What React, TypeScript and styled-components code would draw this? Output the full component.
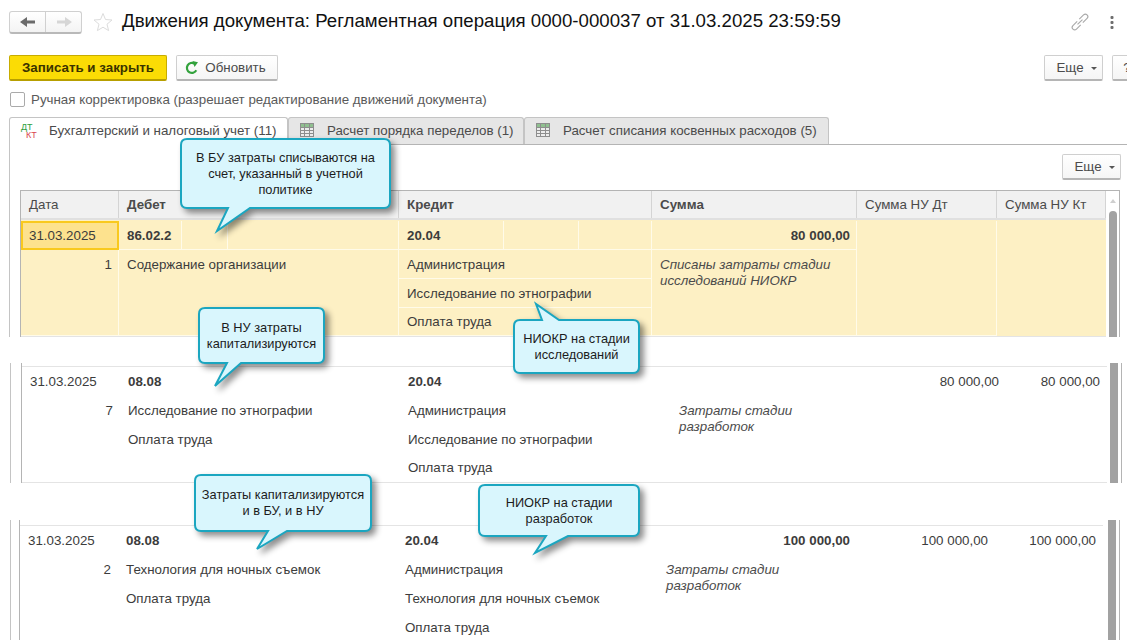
// App.tsx
import React from "react";
import styled, { createGlobalStyle } from "styled-components";

const GlobalStyle = createGlobalStyle`
  html, body {
    margin: 0;
    padding: 0;
    background: #fff;
    overflow: hidden;
  }
  body {
    font-family: "Liberation Sans", Arial, sans-serif;
    font-size: 13.33px;
    color: #4b4b4b;
  }
`;

const Page = styled.div`
  position: relative;
  width: 1127px;
  height: 640px;
  overflow: hidden;
`;

const Header = styled.div`
  display: flex;
  align-items: center;
  height: 24px;
  padding: 10px 0 0 9px;
`;

const NavGroup = styled.div`
  display: flex;
  width: 73px;
  height: 23px;
  box-sizing: border-box;
  border: 1px solid #d0d0d0;
  border-bottom: 2px solid #b9b9b9;
  border-radius: 3px;
  background: linear-gradient(#fff, #f3f3f3);
`;

const NavButton = styled.div<{ $divider?: boolean }>`
  flex: 1;
  display: flex;
  align-items: center;
  justify-content: center;
  ${(p) => (p.$divider ? "border-right: 1px solid #d0d0d0;" : "")}
`;

const StarIcon = styled.svg`
  width: 20px;
  height: 20px;
  margin: 0 9px 0 11px;
`;

const Title = styled.h1`
  flex: 1;
  margin: 0;
  padding-bottom: 2px;
  font-size: 18.67px;
  font-weight: normal;
  color: #111;
  white-space: nowrap;
`;

const HeaderTools = styled.div`
  display: flex;
  align-items: center;
  gap: 21px;
  margin-right: 13px;
`;

const Toolbar = styled.div`
  display: flex;
  align-items: flex-start;
  gap: 9px;
  margin-top: 21px;
  padding-left: 9px;
  height: 26px;
`;

const Button = styled.div<{ $width: number; $primary?: boolean }>`
  display: flex;
  align-items: center;
  justify-content: center;
  flex-shrink: 0;
  gap: 7px;
  box-sizing: border-box;
  width: ${(p) => p.$width}px;
  height: 26px;
  border-radius: 2px;
  white-space: nowrap;
  ${(p) =>
    p.$primary
      ? `
    background: #fbdc05;
    border: 1px solid #c7ac00;
    border-bottom: 2px solid #b79f00;
    color: #3a3300;
    font-weight: bold;
  `
      : `
    background: linear-gradient(#fff, #f5f5f5);
    border: 1px solid #cfcfcf;
    border-bottom: 2px solid #b5b5b5;
    color: #4b4b4b;
  `}
`;

const RefreshButton = styled(Button)`
  gap: 6px;
  padding-right: 3px;
`;

const MoreButton = styled(Button)`
  padding-left: 6px;
`;

const ToolbarSpacer = styled.div`
  width: 748px;
  flex-shrink: 0;
`;

const Caret = styled.span`
  width: 0;
  height: 0;
  margin-top: 2px;
  border-left: 3px solid transparent;
  border-right: 3px solid transparent;
  border-top: 3px solid #555;
`;

const CheckRow = styled.label`
  display: flex;
  align-items: center;
  gap: 6px;
  height: 16px;
  margin-top: 10px;
  padding-left: 10px;
  color: #5a5a5a;
`;

const CheckBox = styled.span`
  width: 15px;
  height: 15px;
  box-sizing: border-box;
  border: 1px solid #aaa;
  border-radius: 2px;
  background: #fff;
`;

const TabBar = styled.div`
  display: flex;
  height: 28px;
  margin: 10px 0 0 9px;
  box-sizing: border-box;
  border-bottom: 1px solid #b4b4b4;
`;

const Tab = styled.div<{ $width: number; $active?: boolean }>`
  display: flex;
  align-items: center;
  gap: 13px;
  box-sizing: border-box;
  width: ${(p) => p.$width}px;
  height: ${(p) => (p.$active ? 28 : 27)}px;
  padding: 0 0 2px 11px;
  border: 1px solid #c4c4c4;
  border-bottom: none;
  border-radius: 3px 3px 0 0;
  background: ${(p) => (p.$active ? "#fff" : "#e6e6e6")};
  color: #4b4b4b;
  white-space: nowrap;
`;

const DtKt = styled.span`
  display: block;
  width: 15px;
  flex-shrink: 0;
  font-size: 9px;
  line-height: 8px;
`;

const Dt = styled.span`
  display: block;
  color: #2e9e3e;
`;

const Kt = styled.span`
  display: block;
  padding-left: 5px;
  color: #d9474f;
`;

const PanelTools = styled.div`
  display: flex;
  justify-content: flex-end;
  height: 45px;
  box-sizing: border-box;
  margin-left: 9px;
  padding: 9px 6px 0 0;
  border-left: 1px solid #c4c4c4;
`;

// Each strip is a fragment of the same table, cut apart by a white gap
const Strip = styled.div<{ $height: number; $gap: number; $left: number; $inset: number }>`
  display: flex;
  height: ${(p) => p.$height}px;
  margin-top: ${(p) => p.$gap}px;
  margin-left: ${(p) => p.$left}px;
  padding-left: ${(p) => p.$inset}px;
  border-left: 1px solid #c4c4c4;
  overflow: hidden;
`;

const TableBody = styled.div<{ $width: number }>`
  width: ${(p) => p.$width}px;
  flex-shrink: 0;
  border-left: 1px solid #b4b4b4;
`;

const HeaderRow = styled.div<{ $cols: string }>`
  display: grid;
  grid-template-columns: ${(p) => p.$cols};
  height: 30px;
  box-sizing: border-box;
  border-top: 1px solid #b4b4b4;
  border-bottom: 2px solid #e0e0e0;
`;

const HeaderCell = styled.div<{ $bold?: boolean }>`
  display: flex;
  align-items: center;
  padding-left: 8px;
  background: #f1f1f1;
  border-right: 1px solid #d4d4d4;
  font-weight: ${(p) => (p.$bold ? "bold" : "normal")};
  color: #4b4b4b;
`;

const EntryGrid = styled.div<{ $cols: string; $marked?: boolean; $top: number; $closed?: boolean }>`
  display: grid;
  grid-template-columns: ${(p) => p.$cols};
  grid-template-rows: repeat(3, 29px) ${(p) => (p.$closed ? 28 : 29)}px;
  margin-top: ${(p) => p.$top}px;
  border-top: 1px solid ${(p) => (p.$marked ? "#fdf0c4" : "#e4e4e4")};
  ${(p) => (p.$closed ? "border-bottom: 1px solid #e4e4e4;" : "")}
  background: ${(p) => (p.$marked ? "#fdf0c4" : "#fff")};
`;

const Cell = styled.div<{
  $col: number;
  $row: number;
  $rowSpan?: number;
  $right?: boolean;
  $bold?: boolean;
  $italic?: boolean;
  $lined?: boolean;
}>`
  grid-column: ${(p) => p.$col};
  grid-row: ${(p) => p.$row} / span ${(p) => p.$rowSpan || 1};
  display: flex;
  align-items: ${(p) => (p.$rowSpan ? "flex-start" : "center")};
  justify-content: ${(p) => (p.$right ? "flex-end" : "flex-start")};
  box-sizing: border-box;
  padding: ${(p) => (p.$rowSpan ? "7px" : "0")} ${(p) => (p.$right ? 7 : 8)}px 0 8px;
  min-width: 0;
  font-weight: ${(p) => (p.$bold ? "bold" : "normal")};
  font-style: ${(p) => (p.$italic ? "italic" : "normal")};
  line-height: 16px;
  color: #3c3c3c;
  ${(p) => (p.$lined ? "box-shadow: inset -1px -1px 0 #fffbe9;" : "")}
`;

const Note = styled.span<{ $max: number }>`
  display: block;
  max-width: ${(p) => p.$max}px;
  white-space: normal;
  color: #4b4b4b;
`;

const ActiveDate = styled(Cell)`
  background: #fde28e;
  border: 2px solid #f9c91e;
  padding-left: 6px;
`;

const SubCells = styled.div<{ $cols: string }>`
  display: grid;
  grid-template-columns: ${(p) => p.$cols};
  height: 100%;
  width: calc(100% + 16px);
  margin-left: -8px;
`;

const SubCell = styled.div`
  display: flex;
  align-items: center;
  padding-left: 8px;
  box-shadow: inset -1px 0 0 #fffbe9;
`;

const Rail = styled.div<{ $offset: number; $width: number; $top?: boolean }>`
  flex-shrink: 0;
  width: ${(p) => p.$width}px;
  padding-left: ${(p) => p.$offset}px;
  box-sizing: border-box;
  border-right: 1px solid #b4b4b4;
  ${(p) => (p.$top ? "border-top: 1px solid #b4b4b4;" : "")}
`;

const Thumb = styled.div<{ $rounded?: boolean; $top: number }>`
  width: 8px;
  height: 100%;
  margin-top: ${(p) => p.$top}px;
  background: #a2a2a2;
  border-radius: ${(p) => (p.$rounded ? "4px 4px 0 0" : "0")};
`;

const RailArrow = styled.span`
  position: absolute;
  left: 1110px;
  top: 199px;
  width: 0;
  height: 0;
  border-left: 3px solid transparent;
  border-right: 3px solid transparent;
  border-bottom: 4px solid #cfcfcf;
`;

const CalloutBox = styled.div<{ $x: number; $y: number; $w: number; $h: number }>`
  position: absolute;
  left: ${(p) => p.$x}px;
  top: ${(p) => p.$y}px;
  width: ${(p) => p.$w}px;
  height: ${(p) => p.$h}px;
  display: flex;
  align-items: center;
  justify-content: center;
`;

const CalloutShape = styled.svg`
  position: absolute;
  left: 0;
  top: 0;
  overflow: visible;
  filter: drop-shadow(4px 4px 3px rgba(0, 0, 0, 0.45));
`;

const CalloutText = styled.div`
  position: relative;
  text-align: center;
  font-size: 12.8px;
  line-height: 16px;
  color: #1c1c1c;
  white-space: pre-line;
`;

type CalloutProps = {
  x: number;
  y: number;
  w: number;
  h: number;
  tail: [number, number, number, number];
  up?: boolean;
  text: string;
};

// tail = base start, base end, tip x, tip y (page coordinates)
const Callout: React.FC<CalloutProps> = ({ x, y, w, h, tail, up, text }) => {
  const r = 6;
  const a = tail[0] - x;
  const b = tail[1] - x;
  const tx = tail[2] - x;
  const ty = tail[3] - y;
  const d = up
    ? `M${r} 0 H${a} L${tx} ${ty} L${b} 0 H${w - r} Q${w} 0 ${w} ${r} V${h - r} Q${w} ${h} ${w - r} ${h} H${r} Q0 ${h} 0 ${h - r} V${r} Q0 0 ${r} 0 Z`
    : `M${r} 0 H${w - r} Q${w} 0 ${w} ${r} V${h - r} Q${w} ${h} ${w - r} ${h} H${b} L${tx} ${ty} L${a} ${h} H${r} Q0 ${h} 0 ${h - r} V${r} Q0 0 ${r} 0 Z`;
  return (
    <CalloutBox $x={x} $y={y} $w={w} $h={h}>
      <CalloutShape width={w} height={h}>
        <path d={d} fill="#d9f6fd" stroke="#1ba6c0" strokeWidth="2" />
      </CalloutShape>
      <CalloutText>{text}</CalloutText>
    </CalloutBox>
  );
};

const TableIcon: React.FC = () => (
  <svg width="14" height="14" viewBox="0 0 14 14">
    <rect x="0.5" y="0.5" width="13" height="13" fill="#ececec" stroke="#8d8d8d" />
    <rect x="1" y="1" width="12" height="3" fill="#8fbf8f" />
    <path d="M0 4.5H14M0 7.5H14M0 10.5H14M4.5 0V14M9.5 0V14" stroke="#8d8d8d" />
  </svg>
);

const ArrowIcon: React.FC<{ left?: boolean; color: string }> = ({ left, color }) => (
  <svg width="16" height="12" viewBox="0 0 16 12">
    <path
      d={left ? "M0 6 L7 1 V4.5 H15 V7.5 H7 V11 Z" : "M16 6 L9 1 V4.5 H1 V7.5 H9 V11 Z"}
      fill={color}
    />
  </svg>
);

const RefreshIcon: React.FC = () => (
  <svg width="14" height="14" viewBox="0 0 14 14">
    <path d="M11.3 9.3 A5 5 0 1 1 9.5 2.6" fill="none" stroke="#33a23d" strokeWidth="2.2" />
    <path d="M7.5 0 L13 1.2 L9.5 6 Z" fill="#33a23d" />
  </svg>
);

const LinkIcon: React.FC = () => (
  <svg width="18" height="18" viewBox="0 0 18 18" fill="none" stroke="#a9a9a9" strokeWidth="1.1" overflow="visible">
    <g transform="rotate(-45 9 9)">
      <path d="M7.5 6.5H1.5a2.5 2.5 0 0 0 0 5H7.5" />
      <path d="M10.5 6.5H16.5a2.5 2.5 0 0 1 0 5H10.5" />
      <path d="M5.5 9H12.5" />
    </g>
  </svg>
);

const DotsIcon: React.FC = () => (
  <svg width="4" height="14" viewBox="0 0 4 14" fill="#6e6e6e">
    <rect x="0.5" y="1" width="3" height="3" rx="1" />
    <rect x="0.5" y="6" width="3" height="3" rx="1" />
    <rect x="0.5" y="11" width="3" height="3" rx="1" />
  </svg>
);

const COLS_TOP = "98px 280px 253px 205px 140px 109px";
const COLS_MID = "98px 280px 271px 186px 149px 101px";
const COLS_LOW = "98px 279px 261px 199px 138px 108px";

const App: React.FC = () => {
  return (
    <Page>
      <GlobalStyle />
      <Header>
        <NavGroup>
          <NavButton $divider>
            <ArrowIcon left color="#6b6b6b" />
          </NavButton>
          <NavButton>
            <ArrowIcon color="#d6d6d6" />
          </NavButton>
        </NavGroup>
        <StarIcon viewBox="0 0 20 20">
          <path
            d="M10 1.5 L12.5 7.5 L19 8 L14 12.2 L15.6 18.6 L10 15.2 L4.4 18.6 L6 12.2 L1 8 L7.5 7.5 Z"
            fill="none"
            stroke="#dcdcdc"
          />
        </StarIcon>
        <Title>Движения документа: Регламентная операция 0000-000037 от 31.03.2025 23:59:59</Title>
        <HeaderTools>
          <LinkIcon />
          <DotsIcon />
        </HeaderTools>
      </Header>

      <Toolbar>
        <Button $width={158} $primary>Записать и закрыть</Button>
        <RefreshButton $width={102}>
          <RefreshIcon />
          Обновить
        </RefreshButton>
        <ToolbarSpacer />
        <MoreButton $width={59}>
          Еще <Caret />
        </MoreButton>
        <Button $width={30}>?</Button>
      </Toolbar>

      <CheckRow>
        <CheckBox />
        Ручная корректировка (разрешает редактирование движений документа)
      </CheckRow>

      <TabBar>
        <Tab $width={279} $active>
          <DtKt>
            <Dt>ДТ</Dt>
            <Kt>КТ</Kt>
          </DtKt>
          Бухгалтерский и налоговый учет (11)
        </Tab>
        <Tab $width={236}>
          <TableIcon />
          Расчет порядка переделов (1)
        </Tab>
        <Tab $width={305}>
          <TableIcon />
          Расчет списания косвенных расходов (5)
        </Tab>
      </TabBar>

      <PanelTools>
        <MoreButton $width={59}>
          Еще <Caret />
        </MoreButton>
      </PanelTools>

      <Strip $height={147} $gap={0} $left={9} $inset={10}>
        <TableBody $width={1085}>
          <HeaderRow $cols={COLS_TOP}>
            <HeaderCell>Дата</HeaderCell>
            <HeaderCell $bold>Дебет</HeaderCell>
            <HeaderCell $bold>Кредит</HeaderCell>
            <HeaderCell $bold>Сумма</HeaderCell>
            <HeaderCell>Сумма НУ Дт</HeaderCell>
            <HeaderCell>Сумма НУ Кт</HeaderCell>
          </HeaderRow>
          <EntryGrid $cols={COLS_TOP} $marked $top={0} $closed>
            <ActiveDate $col={1} $row={1}>31.03.2025</ActiveDate>
            <Cell $col={2} $row={1} $bold $lined>
              <SubCells $cols="63px 46px 171px">
                <SubCell>86.02.2</SubCell>
                <SubCell />
                <SubCell />
              </SubCells>
            </Cell>
            <Cell $col={3} $row={1} $bold $lined>
              <SubCells $cols="105px 75px 73px">
                <SubCell>20.04</SubCell>
                <SubCell />
                <SubCell />
              </SubCells>
            </Cell>
            <Cell $col={4} $row={1} $bold $right $lined>80 000,00</Cell>
            <Cell $col={5} $row={1} $rowSpan={4} $lined />
            <Cell $col={6} $row={1} $rowSpan={4} />
            <Cell $col={1} $row={2} $rowSpan={3} $right $lined>1</Cell>
            <Cell $col={2} $row={2} $rowSpan={3} $lined>Содержание организации</Cell>
            <Cell $col={3} $row={2} $lined>Администрация</Cell>
            <Cell $col={3} $row={3} $lined>Исследование по этнографии</Cell>
            <Cell $col={3} $row={4} $lined>Оплата труда</Cell>
            <Cell $col={4} $row={2} $rowSpan={3} $italic $lined>
              <Note $max={189}>Списаны затраты стадии исследований НИОКР</Note>
            </Cell>
          </EntryGrid>
        </TableBody>
        <Rail $offset={3} $width={14} $top>
          <Thumb $rounded $top={20} />
        </Rail>
      </Strip>
      <RailArrow />

      <Strip $height={120} $gap={26} $left={10} $inset={10}>
        <TableBody $width={1085}>
          <EntryGrid $cols={COLS_MID} $top={3} $closed>
            <Cell $col={1} $row={1}>31.03.2025</Cell>
            <Cell $col={2} $row={1} $bold>08.08</Cell>
            <Cell $col={3} $row={1} $bold>20.04</Cell>
            <Cell $col={5} $row={1} $right>80 000,00</Cell>
            <Cell $col={6} $row={1} $right>80 000,00</Cell>
            <Cell $col={1} $row={2} $right>7</Cell>
            <Cell $col={2} $row={2}>Исследование по этнографии</Cell>
            <Cell $col={2} $row={3}>Оплата труда</Cell>
            <Cell $col={3} $row={2}>Администрация</Cell>
            <Cell $col={3} $row={3}>Исследование по этнографии</Cell>
            <Cell $col={3} $row={4}>Оплата труда</Cell>
            <Cell $col={4} $row={2} $rowSpan={3} $italic>
              <Note $max={130}>Затраты стадии разработок</Note>
            </Cell>
          </EntryGrid>
        </TableBody>
        <Rail $offset={3} $width={15}>
          <Thumb $top={0} />
        </Rail>
      </Strip>

      <Strip $height={120} $gap={37} $left={10} $inset={8}>
        <TableBody $width={1083}>
          <EntryGrid $cols={COLS_LOW} $top={5}>
            <Cell $col={1} $row={1}>31.03.2025</Cell>
            <Cell $col={2} $row={1} $bold>08.08</Cell>
            <Cell $col={3} $row={1} $bold>20.04</Cell>
            <Cell $col={4} $row={1} $bold $right>100 000,00</Cell>
            <Cell $col={5} $row={1} $right>100 000,00</Cell>
            <Cell $col={6} $row={1} $right>100 000,00</Cell>
            <Cell $col={1} $row={2} $right>2</Cell>
            <Cell $col={2} $row={2}>Технология для ночных съемок</Cell>
            <Cell $col={2} $row={3}>Оплата труда</Cell>
            <Cell $col={3} $row={2}>Администрация</Cell>
            <Cell $col={3} $row={3}>Технология для ночных съемок</Cell>
            <Cell $col={3} $row={4}>Оплата труда</Cell>
            <Cell $col={4} $row={2} $rowSpan={3} $italic>
              <Note $max={130}>Затраты стадии разработок</Note>
            </Cell>
          </EntryGrid>
        </TableBody>
        <Rail $offset={5} $width={17}>
          <Thumb $top={0} />
        </Rail>
      </Strip>

      <Callout x={181} y={139} w={209} h={69} tail={[228, 250, 217, 231]} text={"В БУ затраты списываются на\nсчет, указанный в учетной\nполитике"} />
      <Callout x={199} y={308} w={125} h={55} tail={[227, 241, 215, 386]} text={"В НУ затраты\nкапитализируются"} />
      <Callout x={514} y={320} w={125} h={53} tail={[542, 559, 536, 304]} up text={"НИОКР на стадии\nисследований"} />
      <Callout x={195} y={475} w={176} h={56} tail={[268, 287, 257, 549]} text={"Затраты капитализируются\nи в БУ, и в НУ"} />
      <Callout x={479} y={485} w={160} h={51} tail={[546, 568, 535, 553]} text={"НИОКР на стадии\nразработок"} />
    </Page>
  );
};

export default App;
